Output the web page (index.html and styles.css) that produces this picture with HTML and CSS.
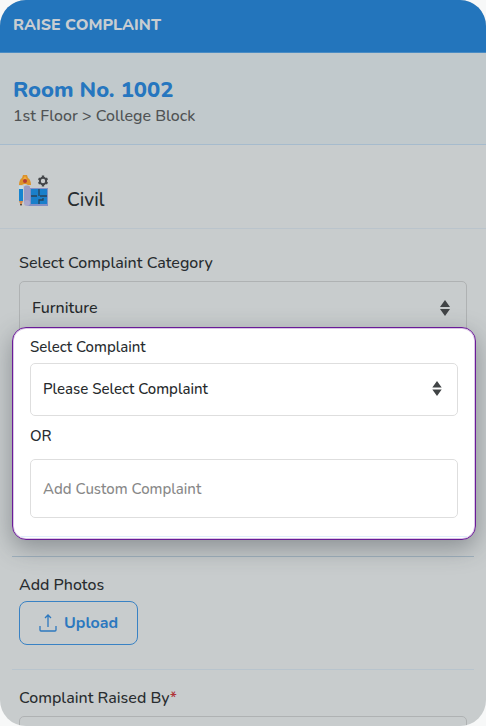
FILE: index.html
```html
<!DOCTYPE html>
<html lang="en">
<head>
<meta charset="utf-8">
<meta name="viewport" content="width=device-width, initial-scale=1">
<title>Raise Complaint</title>
<link rel="stylesheet" href="styles.css">
</head>
<body>
<main class="screen">
  <header class="topbar"><h1>RAISE COMPLAINT</h1></header>
  <section class="room">
    <h2>Room No. 1002</h2>
    <p>1st Floor &gt; College Block</p>
  </section>
  <section class="department">
    <svg class="department-icon" viewBox="0 0 32 32" aria-hidden="true">
      <path d="M1 10C1 7 2 4 4 3L5 0h4l1 3c2 1 3 4 3 7h-3L8 9H6l-2 1Z" fill="#dc922b"/>
      <path d="M5 4 7 1l2 3-2 2Z" fill="#efae3d"/>
      <circle cx="7" cy="6" r="2" fill="#b33c38"/>
      <path d="M1 11h4v3H1Z" fill="#c4dce5"/>
      <path d="M1 14h4v12H1Z" fill="#1784d0"/>
      <path d="M1 26h4l-2 5Z" fill="#d48a4b"/>
      <path d="m2 29 1 2 1-2Z" fill="#333"/>
      <path d="M9 13h21v18H9Z" fill="#8290c5"/>
      <path d="M6 12c0-2 6-2 6 0v16H6Z" fill="#9a9bc5"/>
      <circle cx="9" cy="28" r="3" fill="#aaa9cc"/>
      <path d="M13 14h16v15H13Z" fill="#197fca"/>
      <path d="M13 21h6m3 0h7M21 14v7m0 8v-4h4v-2" fill="none" stroke="#294358" stroke-width="1.3"/>
      <circle cx="25" cy="6" r="3.200" fill="none" stroke="#44474a" stroke-width="2"/>
      <path d="M25 .5v2.500m0 6v2.500M20.500 3.500 22.500 4.500m5 3L29.500 8.500M20.500 8.500l2-1m5-3 2-1" stroke="#44474a" stroke-width="2.400"/>
    </svg>
    <h3>Civil</h3>
  </section>
  <form class="form">
    <div class="field">
      <label for="category">Select Complaint Category</label>
      <div class="select-wrap">
        <select id="category"><option>Furniture</option></select>
        <svg class="arrows" viewBox="0 0 10 16" aria-hidden="true"><path d="M5 0 10 7H0ZM0 9h10l-5 7Z"/></svg>
      </div>
    </div>
    <section class="spotlight">
      <label for="complaint">Select Complaint</label>
      <div class="select-wrap">
        <select id="complaint"><option>Please Select Complaint</option></select>
        <svg class="arrows" viewBox="0 0 10 16" aria-hidden="true"><path d="M5 0 10 7H0ZM0 9h10l-5 7Z"/></svg>
      </div>
      <label class="or" for="custom">OR</label>
      <div class="custom"><input id="custom" type="text" placeholder="Add Custom Complaint"></div>
    </section>
    <section class="photos">
      <h4>Add Photos</h4>
      <button type="button" class="upload">
        <svg viewBox="0 0 18 18" aria-hidden="true"><path d="M1 12v4q0 1 1 1h14q1 0 1-1v-4M9 13V1M6 4l3-3 3 3"/></svg>
        Upload
      </button>
    </section>
    <div class="field raised">
      <label for="raised">Complaint Raised By<span class="required">*</span></label>
      <input id="raised" type="text">
    </div>
  </form>
</main>
</body>
</html>
```
FILE: styles.css
```css
* { box-sizing: border-box; }
body {
  margin: 0;
  background: #f7f8f8;
  color: #282c2f;
  font: 500 16px/20px Nunito, Lato, sans-serif;
}
h1, h2, h3, h4, p { margin: 0; font-weight: 500; }
.screen {
  height: 100vh;
  overflow: hidden;
  border-radius: 26px;
  background: #c8cccd;
}
.topbar {
  padding: 15px 13px 17px;
  border-bottom: 1px solid #4a8cc4;
  background: #2375bc;
  color: #c8cdd1;
}
.topbar h1 { font-size: 16px; line-height: 20px; font-weight: 800; }
.room {
  padding: 23px 13px 16px;
  border-bottom: 1px solid #a6bbcd;
  background: #c1c9cc;
  color: #505354;
}
.room h2 { color: #2676bf; font-size: 22px; line-height: 28px; font-weight: 800; }
.room p { line-height: 24px; }
.department {
  display: flex;
  align-items: flex-end;
  gap: 17px;
  padding: 30px 18px 16px;
  border-bottom: 1px solid #bac4cc;
}
.department-icon { width: 32px; height: 32px; margin-bottom: 5px; }
.department h3 { font-size: 19px; line-height: 24px; }
.form { padding: 0 12px; }
label, h4 { display: block; }
.field { padding: 24px 7px 0; }
.field label { margin-bottom: 8px; }
.select-wrap { position: relative; }
select, input {
  display: block;
  width: 100%;
  height: 53px;
  padding: 0 12px;
  border: 1px solid #afb2b3;
  border-radius: 5px;
  background: transparent;
  color: #26292b;
  font: inherit;
  appearance: none;
}
.arrows {
  position: absolute;
  top: 19px;
  right: 17px;
  width: 10px;
  height: 16px;
  fill: #414446;
  pointer-events: none;
}
.spotlight {
  position: relative;
  margin: -7px -2px 0 0;
  padding: 9px 0 2px;
  overflow: hidden;
  border: 1px solid #6a1b98;
  border-radius: 14px;
  background: #fff;
  box-shadow: inset 0 0 0 1px #6a1b9840, 0 8px 24px #2c353b66;
  font-size: 15px;
}
.spotlight label, .spotlight .select-wrap { margin: 0 17px 6px; }
.spotlight select { padding-bottom: 2px; }
.spotlight .arrows { top: 18px; right: 16px; height: 15px; }
.spotlight .or { margin: 10px 17px 13px; }
.custom { margin: 0 8px; padding: 0 9px 18px; border-bottom: 1px solid #e0f0fb; }
.spotlight select, .spotlight input { border-color: #dedede; }
.spotlight input { height: 59px; }
.spotlight ::placeholder { color: #888; opacity: 1; }
.photos {
  margin-top: 16px;
  padding: 18px 7px 24px;
  border-top: 1px solid #9fb0bd;
  border-bottom: 1px solid #b8c4cd;
}
.photos h4 { margin-bottom: 6px; }
.upload {
  display: flex;
  align-items: center;
  gap: 7px;
  height: 44px;
  padding: 0 19px;
  border: 1px solid #3982c4;
  border-radius: 8px;
  background: transparent;
  color: #2c78bf;
  font: inherit;
  font-weight: 700;
}
.upload svg { width: 18px; height: 18px; fill: none; stroke: currentColor; stroke-width: 1.3; }
.raised { padding-top: 18px; }
.required { color: #b03338; }
```
